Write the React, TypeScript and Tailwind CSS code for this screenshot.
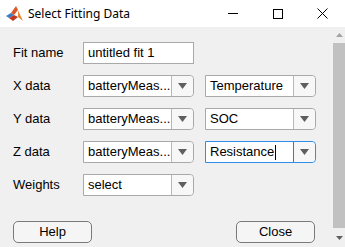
import React from "react";

const font = { fontFamily: '"Liberation Sans", Arial, sans-serif' };

function Arrow() {
  return (
    <svg width="9" height="6" viewBox="0 0 9 6">
      <path d="M0 0 H9 L4.5 6 Z" fill="#5f5f5f" />
    </svg>
  );
}

function Dropdown({ value, focused }: { value: string; focused?: boolean }) {
  return (
    <div
      className={
        "flex h-[22px] w-[111px] rounded-r-[4px] border bg-white " +
        (focused ? "border-[#2f8ee6]" : "border-[#a9a9a9]")
      }
    >
      <div className="flex w-[87px] items-center overflow-hidden whitespace-nowrap pl-[4px] text-[13px] text-black">
        {value}
        {focused && <span className="ml-[1px] inline-block h-[15px] w-[1px] bg-black" />}
      </div>
      <div
        className={
          "flex flex-1 items-center justify-center rounded-r-[4px] border-l bg-[#f7f7f7] " +
          (focused ? "border-[#707070]" : "border-[#b9b9b9]")
        }
      >
        <Arrow />
      </div>
    </div>
  );
}

function Row({ label, children }: { label: string; children: React.ReactNode }) {
  return (
    <div className="flex h-[22px] items-center">
      <div className="w-[70px] text-[13px] text-black">{label}</div>
      {children}
    </div>
  );
}

function MatlabLogo() {
  return (
    <svg width="17" height="15" viewBox="0 0 17 15">
      <path d="M0 10 L5 7 L8 9 L3 12 Z" fill="#3b7dc4" />
      <path d="M5 7 L10 0 L12 4 L8 9 Z" fill="#d9592a" />
      <path d="M10 0 L17 15 L12 11 L12 4 Z" fill="#e9862f" />
      <path d="M3 12 L8 9 L12 11 L7 15 Z" fill="#c0391e" />
    </svg>
  );
}

export default function App() {
  return (
    <div className="flex h-[247px] w-[345px] flex-col overflow-hidden bg-[#f0f0f0]" style={font}>
      {/* title bar */}
      <div
        className="flex h-[27px] shrink-0 items-center bg-white"
        style={{ fontFamily: '"Noto Sans", "Open Sans", sans-serif' }}
      >
        <div className="ml-[6px] mr-[5px] flex items-center">
          <MatlabLogo />
        </div>
        <span className="text-[12px] text-black">Select Fitting Data</span>
        <div className="ml-auto flex items-center">
          <div className="flex w-[45px] justify-center">
            <div className="h-[1px] w-[10px] bg-black" />
          </div>
          <div className="flex w-[45px] justify-center">
            <div className="h-[10px] w-[10px] border border-black" />
          </div>
          <div className="flex w-[45px] justify-center">
            <svg width="11" height="11" viewBox="0 0 11 11">
              <path d="M0.5 0.5 L10.5 10.5 M10.5 0.5 L0.5 10.5" stroke="#000" strokeWidth="1" />
            </svg>
          </div>
        </div>
      </div>

      <div className="flex flex-1">
        {/* content */}
        <div className="flex flex-1 flex-col pl-[13px] pt-[15px]">
          <Row label="Fit name">
            <div className="flex h-[22px] w-[111px] items-center border border-[#a9a9a9] bg-white pl-[4px] text-[13px] text-black">
              untitled fit 1
            </div>
          </Row>
          <div className="mt-[11px] flex flex-col gap-[11px]">
            <Row label="X data">
              <Dropdown value="batteryMeas..." />
              <div className="ml-[11px]">
                <Dropdown value="Temperature" />
              </div>
            </Row>
            <Row label="Y data">
              <Dropdown value="batteryMeas..." />
              <div className="ml-[11px]">
                <Dropdown value="SOC" />
              </div>
            </Row>
            <Row label="Z data">
              <Dropdown value="batteryMeas..." />
              <div className="ml-[11px]">
                <Dropdown value="Resistance" focused />
              </div>
            </Row>
            <Row label="Weights">
              <Dropdown value="select" />
            </Row>
          </div>
          <div className="mt-[25px] flex w-[302px] justify-between">
            <button className="h-[22px] w-[79px] rounded-[5px] border border-[#7a7a7a] bg-[#f5f5f5] text-[13px] text-black">
              Help
            </button>
            <button className="h-[22px] w-[79px] rounded-[5px] border border-[#7a7a7a] bg-[#f5f5f5] text-[13px] text-black">
              Close
            </button>
          </div>
        </div>

        {/* scrollbar */}
        <div className="flex w-[12px] flex-col items-center">
          <div className="flex h-[16px] items-center">
            <svg width="7" height="4" viewBox="0 0 7 4">
              <path d="M0 4 L3.5 0 L7 4 Z" fill="#a3a3a3" />
            </svg>
          </div>
          <div className="w-full flex-1 bg-[#c1c1c1]" />
          <div className="flex h-[19px] items-center">
            <svg width="7" height="4" viewBox="0 0 7 4">
              <path d="M0 0 L7 0 L3.5 4 Z" fill="#606060" />
            </svg>
          </div>
        </div>
      </div>
    </div>
  );
}
